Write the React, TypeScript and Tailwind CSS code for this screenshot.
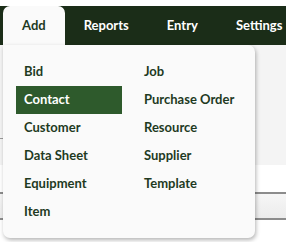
const tabs = ['Add', 'Reports', 'Entry', 'Settings']

const left = ['Bid', 'Contact', 'Customer', 'Data Sheet', 'Equipment', 'Item']
const right = ['Job', 'Purchase Order', 'Resource', 'Supplier', 'Template']

function MenuItem({ label, active }: { label: string; active?: boolean }) {
	return (
		<div
			className={
				'h-[28px] flex items-center pl-2 ' +
				(active ? 'bg-[#2e5a2c] text-white' : 'text-[#1f3a1f]')
			}
		>
			{label}
		</div>
	)
}

export default function App() {
	return (
		<div className="relative w-[286px] h-[242px] overflow-hidden bg-[#f4f4f4] font-['Lato',sans-serif]">
			<div className="h-[6px] bg-white"></div>
			<div className="h-[39px] bg-[#1b2d18] flex pl-[3px] text-[13px] font-bold text-white">
				{tabs.map((t, i) => (
					<div
						key={t}
						className={
							'px-[19px] flex items-center whitespace-nowrap ' +
							(i === 0 ? 'bg-[#fafafa] text-[#1f3a1f] rounded-t-[7px]' : '')
						}
					>
						{t}
					</div>
				))}
			</div>

			{/* page content behind the menu */}
			<div className="flex flex-col">
				<div className="h-[40px]"></div>
				<div className="h-[54px] border-b border-[#9a9a9a] ml-0 w-[4px]"></div>
				<div className="h-[26px]"></div>
				<div className="h-[29px] bg-white border-b-2 border-[#8c8c8c]"></div>
				<div className="h-[26px] bg-gradient-to-b from-[#f6f6f6] to-[#ececec] border-b-2 border-[#8c8c8c]"></div>
				<div className="h-[30px] bg-white"></div>
			</div>

			{/* dropdown */}
			<div className="absolute left-[3px] top-[45px] w-[252px] h-[193px] bg-[#fafafa] rounded-b-[7px] rounded-tr-[7px] shadow-[1px_2px_4px_rgba(0,0,0,0.3)] px-[13px] pt-[13px] flex gap-[14px] text-[13px] font-bold">
				<div className="w-[106px] flex flex-col">
					{left.map((l) => (
						<MenuItem key={l} label={l} active={l === 'Contact'} />
					))}
				</div>
				<div className="w-[106px] flex flex-col">
					{right.map((r) => (
						<MenuItem key={r} label={r} />
					))}
				</div>
			</div>
		</div>
	)
}
